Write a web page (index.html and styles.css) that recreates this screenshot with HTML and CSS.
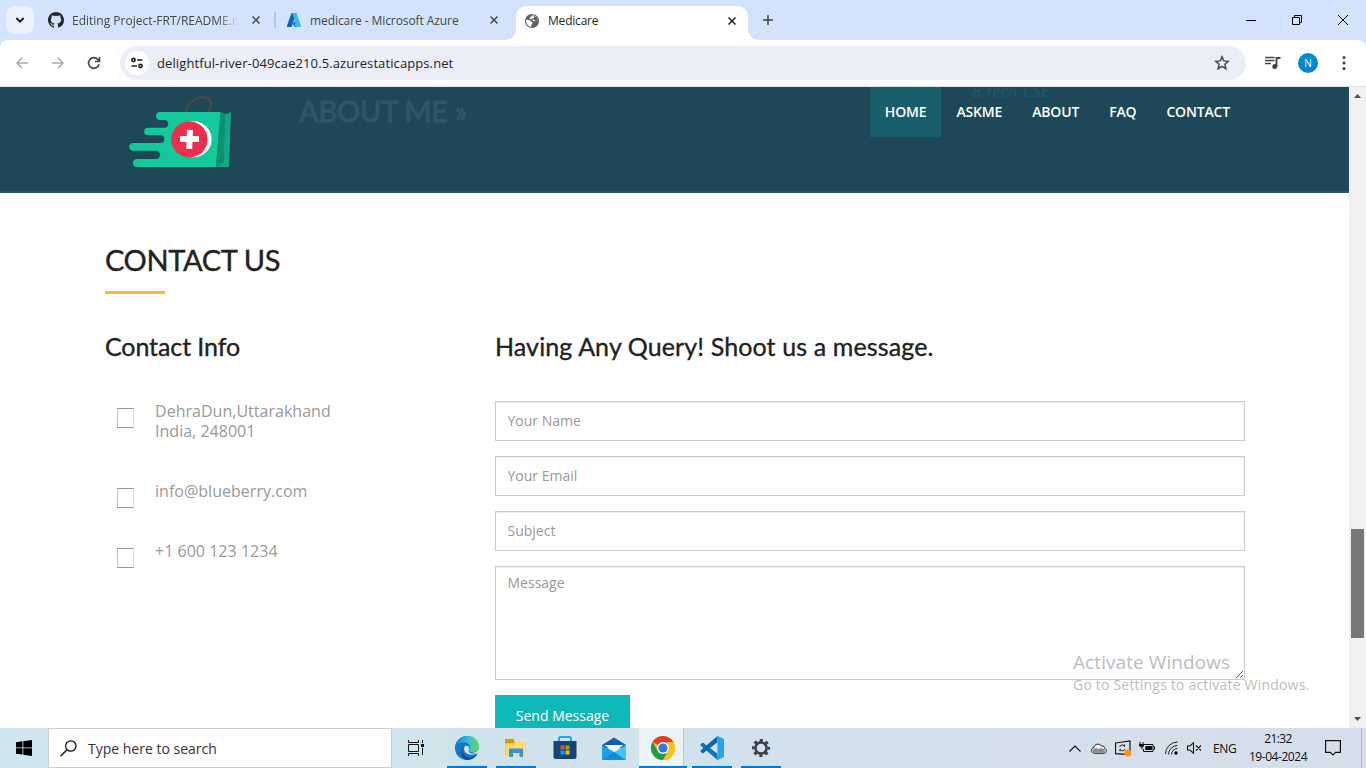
FILE: index.html
```html
<!DOCTYPE html>
<html lang="en">
<head>
<meta charset="utf-8">
<title>Medicare</title>
<link rel="stylesheet" href="styles.css">
</head>
<body>
<div class="screen">
  <header class="tabstrip">
    <div class="tab-search"><svg width="10" height="6" viewBox="0 0 10 6"><path d="M1.3 1l3.7 3.6L8.700 1" fill="none" stroke="#1f1f1f" stroke-width="1.9"/></svg></div>
    <div class="tab tab-one">
      <svg width="16" height="16" viewBox="0 0 16 16"><path fill="#24292f" d="M8 0C3.580 0 0 3.580 0 8c0 3.540 2.290 6.530 5.470 7.590.4.070.550-.170.550-.380 0-.190-.010-.820-.010-1.490-2.010.370-2.530-.490-2.690-.940-.090-.230-.480-.940-.820-1.130-.280-.150-.680-.520-.010-.530.630-.010 1.080.580 1.230.820.720 1.210 1.870.870 2.330.660.070-.520.280-.870.510-1.070-1.780-.2-3.640-.890-3.640-3.950 0-.870.310-1.590.820-2.150-.080-.2-.360-1.020.080-2.120 0 0 .670-.210 2.200.820.640-.180 1.320-.270 2-.270s1.360.090 2 .270c1.530-1.040 2.200-.820 2.200-.820.440 1.100.160 1.920.080 2.120.510.560.820 1.270.820 2.150 0 3.070-1.870 3.750-3.650 3.950.290.250.540.730.540 1.480 0 1.070-.010 1.930-.010 2.200 0 .210.150.460.550.380A8.010 8.010 0 0 0 16 8c0-4.420-3.580-8-8-8z"/></svg>
      <span class="tab-title fade">Editing Project-FRT/README.md</span>
      <svg class="close" width="8" height="8" viewBox="0 0 8 8"><path d="M.5.5l7 7M7.500.5l-7 7"/></svg>
    </div>
    <div class="tab tab-two">
      <svg width="16" height="16" viewBox="0 0 16 16"><path fill="#135fae" d="M5.500 1h4.700L5.500 15H1.500Q.6 15 .9 14z"/><path fill="#1482dc" d="M4 9.800h8L9 13 12 15H9z"/><path fill="#39b5f1" d="M6 1h4.500l4.400 13q.2 1-.8 1H10q.8-.2.500-1z"/></svg>
      <span class="tab-title azure-title">medicare - Microsoft Azure</span>
      <svg class="close" width="8" height="8" viewBox="0 0 8 8"><path d="M.5.5l7 7M7.500.5l-7 7"/></svg>
    </div>
    <div class="tab tab-active">
      <svg width="16" height="16" viewBox="0 0 16 16"><circle cx="8" cy="8" r="7.100" fill="#5f6368"/><path fill="#fff" d="M8.200 2.200c2.900-.2 5.500 2.500 5.500 5.500l-1.300-.5-1.400 1-2.200-.5-.5-1.500H6.100l-.5-1 1-1.500 1.500-.5zM2 6.600l4.600 1.200 1.800 1.700v1.200L7.200 12v2C4 13.600 1.600 10.300 2 6.600z"/><path fill="#5f6368" d="M9.300 2.600l.8 1.800-1 1.200H7.500l-.5 1h3l1 1.200h1.500l1.200-.9-1-2.500z"/></svg>
      <span class="tab-title active-title">Medicare</span>
      <svg class="close dark" width="8" height="8" viewBox="0 0 8 8"><path d="M.5.5l7 7M7.500.5l-7 7"/></svg>
    </div>
    <svg class="new-tab" width="10" height="10" viewBox="0 0 10 10"><path d="M5 0v10M0 5h10" stroke="#454746" stroke-width="1.500"/></svg>
    <div class="window-controls">
      <svg width="10" height="10" viewBox="0 0 10 10"><path d="M0 5.500h10"/></svg>
      <svg width="10" height="10" viewBox="0 0 10 10"><path d="M.5 2.500h7v7h-7zM2.500 2.500v-2h7v7h-2"/></svg>
      <svg width="10" height="10" viewBox="0 0 10 10"><path d="M0 0l10 10M10 0L0 10"/></svg>
    </div>
  </header>

  <div class="toolbar">
    <svg class="tool-icon back" width="12" height="12" viewBox="0 0 12 12"><path d="M12 6H1M6.200.7L1 6l5.200 5.300"/></svg>
    <svg class="tool-icon forward" width="12" height="12" viewBox="0 0 12 12"><path d="M0 6h11M5.800.7L11 6l-5.200 5.300"/></svg>
    <svg class="tool-icon reload" width="14" height="14" viewBox="0 0 14 14"><path d="M12 8.200A5.300 5.300 0 1 1 11 3.700L12.600 5.300M12.500 1v4.500H8"/></svg>
    <div class="omnibox">
      <span class="site-info"><svg width="14" height="12" viewBox="0 0 14 12"><g fill="none" stroke="#1f1f1f" stroke-width="1.600"><circle cx="3.500" cy="3" r="1.600"/><path d="M7 3h5.500M1.500 9H7"/><circle cx="10.500" cy="9" r="1.600"/></g></svg></span>
      <span class="url">delightful-river-049cae210.5.azurestaticapps.net</span>
      <svg width="16" height="16" viewBox="0 0 16 16"><path d="M8 1.800l1.800 4.100 4.500.4-3.400 3 1 4.400L8 11.400l-3.900 2.300 1-4.400-3.400-3 4.500-.4z" fill="none" stroke="#454746" stroke-width="1.500"/></svg>
    </div>
    <svg class="media" width="16" height="14" viewBox="0 0 16 14"><path d="M0 1.500h9.500M0 4.500h9.500M0 7.500h6" stroke="#454746" stroke-width="1.700"/><circle cx="9.800" cy="10.500" r="2.500" fill="#454746"/><path d="M11.500 10.500V2H15.500" fill="none" stroke="#454746" stroke-width="1.900"/></svg>
    <span class="avatar">N</span>
    <svg class="menu" width="4" height="16" viewBox="0 0 4 16"><g fill="#454746"><circle cx="2" cy="2.500" r="1.600"/><circle cx="2" cy="8" r="1.600"/><circle cx="2" cy="13.500" r="1.600"/></g></svg>
  </div>

  <div class="viewport">
    <main class="page">
      <nav class="navbar">
        <svg class="logo" width="106" height="74" viewBox="128 95 106 74">
          <path d="M185.700 112.500C188 101 201 94 208 98.500c4.500 3 3.500 9 .5 13.500" fill="none" stroke="#4e4848" stroke-width="1.800"/>
          <path fill="#13c89b" d="M160 112h61l-5 55h-79a4 4 0 0 1 0-8h19a4 4 0 0 0 0-8.300h-23.500a3.900 3.900 0 0 1 0-7.700H161a3.900 3.900 0 0 0 0-7.700h-13a3.800 3.800 0 0 1 0-7.600h17a3.900 3.900 0 0 0 0-7.700h-5a4 4 0 0 1 0-8z"/>
          <path fill="#0d8f72" d="M220.500 112l5 2-2 49-7.500 4z"/><path fill="#10a983" d="M225 114.500l6-2.500-2 55h-13l7.500-4.500z"/>
          <circle cx="193.600" cy="139.300" r="18" fill="#fff"/><ellipse cx="189.400" cy="139.400" rx="18.200" ry="18" fill="#ed2f4b"/>
          <path d="M190 129.800l-.8 19M180 139h19" stroke="#fff" stroke-width="6"/>
        </svg>
        <span class="ghost ghost-heading">ABOUT ME »</span>
        <span class="ghost ghost-degree">B.tech CSE</span>
        <ul class="nav">
          <li class="current">HOME</li><li>ASKME</li><li>ABOUT</li><li>FAQ</li><li>CONTACT</li>
        </ul>
      </nav>
      <section class="contact">
        <h2>CONTACT US</h2>
        <div class="columns">
          <div class="info">
            <h3>Contact Info</h3>
            <div class="info-row address"><i class="glyph"></i><p>DehraDun,Uttarakhand<br>India, 248001</p></div>
            <div class="info-row email"><i class="glyph"></i><p>info@blueberry.com</p></div>
            <div class="info-row phone"><i class="glyph"></i><p>+1 600 123 1234</p></div>
          </div>
          <form class="query">
            <h3>Having Any Query! Shoot us a message.</h3>
            <input type="text" placeholder="Your Name">
            <input type="text" placeholder="Your Email">
            <input type="text" placeholder="Subject">
            <textarea placeholder="Message"></textarea>
            <button type="button">Send Message</button>
          </form>
        </div>
      </section>
    </main>
    <div class="scrollbar">
      <svg width="7" height="4" viewBox="0 0 7 4"><path d="M0 4L3.500 0 7 4z" fill="#505050"/></svg>
      <div class="thumb"></div>
      <svg width="7" height="4" viewBox="0 0 7 4"><path d="M0 0l3.500 4L7 0z" fill="#505050"/></svg>
    </div>
    <div class="activation"><div class="activation-title">Activate Windows</div><div class="activation-text">Go to Settings to activate Windows.</div></div>
  </div>

  <footer class="taskbar">
    <div class="start"><svg width="16" height="16" viewBox="0 0 16 16"><path d="M0 2.200l6.500-.9v6.200H0zM7.300 1.200L16 0v7.500H7.300zM0 8.300h6.500v6.300L0 13.700zM7.300 8.300H16V16l-8.700-1.200z"/></svg></div>
    <div class="search"><svg width="17" height="17" viewBox="0 0 17 17"><circle cx="10.800" cy="6" r="5.200" fill="none" stroke="#111" stroke-width="1.300"/><path d="M7 9.800L.5 16.300" stroke="#111" stroke-width="1.500"/></svg><span>Type here to search</span></div>
    <div class="app taskview"><svg width="17" height="16" viewBox="0 0 17 16"><path d="M.5 0v2.500h10V0M.5 16v-2.500h10V16M.5 4.500h10v7H.5zM14.500 0v3M14.500 8v7" fill="none" stroke="#111"/><path d="M13 4h3v3h-3z" fill="#111"/></svg></div>
    <div class="app edge running"><svg width="24" height="24" viewBox="0 0 24 24"><defs><linearGradient id="edgeTop" x1="0" x2="1"><stop offset="0" stop-color="#1683ce"/><stop offset=".55" stop-color="#35bedc"/><stop offset="1" stop-color="#65dc55"/></linearGradient></defs><circle cx="12" cy="12" r="12" fill="#1674c8"/><path d="M24 10.500c0 3.500-2 6-6.500 6.300l5 1.200L24 16z" fill="#d1e5ed"/><path d="M.3 10C1.500 4 6.400 0 12 0c7.200 0 12 5 12 10.300 0 3.700-3 6-6 6-2.500 0-4-.8-4-1.800 0-.7 1-1.100 1-3 0-3-2.800-5-6.200-5C5 6.500 1.500 8 .3 10z" fill="url(#edgeTop)"/><path d="M9 10c-3 4-1 11 5 11.500 3 .2 6-1 8.300-3.700C20 22 16 24 12 24 6 23 5 13 9 10z" fill="#114b91"/><path d="M10 10c-3 4.500 1.500 9 6.500 8.800 2.500 0 4.500-1 6-2-1 .1-2.500.8-4.500.8-3.500 0-5-1.700-4-4 1-2.600-1-4.300-4-3.600z" fill="#d1e5ed"/></svg></div>
    <div class="app running"><svg width="22" height="20" viewBox="0 0 22 20"><path d="M0 2h9l2 2h10v14H0z" fill="#fbc64b"/><path d="M0 1h9v4H0z" fill="#d99517"/><path d="M1 6h8l2-2h10v14H1z" fill="#ffd96f"/><path d="M4 19v-8.500h14V19h-3.500v-4H8v4z" fill="#3994d6"/></svg></div>
    <div class="app"><svg width="24" height="24" viewBox="0 0 24 24"><path d="M6 6V2.500Q6 1 7.500 1h9Q18 1 18 2.500V6" fill="none" stroke="#22a7e8" stroke-width="2"/><path d="M.5 5h23v16q0 2-2 2h-19q-2 0-2-2z" fill="#16437a"/><path d="M7.500 9.500h4v4h-4z" fill="#f25022"/><path d="M12.500 9.500h4v4h-4z" fill="#7fba00"/><path d="M7.500 14.500h4v4h-4z" fill="#00a4ef"/><path d="M12.500 14.500h4v4h-4z" fill="#ffb900"/></svg></div>
    <div class="app"><svg width="24" height="23" viewBox="0 0 24 23"><path d="M0 8L12 .5 24 8v3H0z" fill="#1060af"/><path d="M2.500 8h19L12 15z" fill="#f5f7fa"/><path d="M0 8l13 7.500L24 23H0z" fill="#1ba1e6"/><path d="M24 8L12 15.500 24 23z" fill="#43c4f5"/><path d="M0 23l12-8 12 8z" fill="#168bda"/></svg></div>
    <div class="app chrome running"><svg width="24" height="24" viewBox="0 0 24 24"><circle cx="12" cy="12" r="12" fill="#fbc116"/><path d="M12 12L1.600 6a12 12 0 0 1 20.800 0z" fill="#e33b2e"/><path d="M1.600 6A12 12 0 0 0 12 24l5.200-9L12 12 6.800 15z" fill="#229a4b"/><path d="M12 24l5.200-9c1.400-3 .5-6-1.700-9h6.900A12 12 0 0 1 12 24z" fill="#fbc116"/><circle cx="12" cy="12" r="6" fill="#fff"/><circle cx="12" cy="12" r="4.600" fill="#3478e5"/></svg></div>
    <div class="app code running"><svg width="24" height="24" viewBox="0 0 24 24"><path d="M.8 8.200l2-1.700L17.500 17.700V24L.5 9.500z" fill="#1373b5"/><path d="M.8 15.800l2 1.700L17.500 6.300V0L.5 14.500z" fill="#0869ab"/><path d="M17.500 0L24 3v18l-6.500 3-1.300-1.200 1.300-2V3z" fill="#26a3ea"/></svg></div>
    <div class="app running"><svg width="20" height="20" viewBox="0 0 20 20"><g fill="none" stroke="#3e4245"><circle cx="10" cy="10" r="5.600" stroke-width="2.600"/><circle cx="10" cy="10" r="7.800" stroke-width="2.600" stroke-dasharray="3.060 3.066" stroke-dashoffset="1.530"/></g></svg></div>
    <div class="tray">
      <svg class="t-up" width="12" height="7" viewBox="0 0 12 7"><path d="M.5 6.500L6 1l5.500 5.500" fill="none" stroke="#111" stroke-width="1.200"/></svg>
      <svg class="t-cloud" width="16" height="11" viewBox="0 0 16 11"><path d="M3.500 10.300C-.5 10-.5 5 3 4.500 3.500.8 8 0 10.200 2.800c2.500 0 3.500 1 3.500 2.700 2.500 1 2 4.600-.7 4.800z" fill="#eee" stroke="#222"/><path d="M1 8c1.500-3.500 5-3 6-1.800C9.500 4.500 12 5 14 7c.3 1.700-1 2.800-2 2.800H3.500Q1.500 9.500 1 8z" fill="#8c8c8c"/></svg>
      <svg class="t-sync" width="17" height="17" viewBox="0 0 17 17"><path d="M.5 3L15 1v13.500L.5 13.700z" fill="none" stroke="#111" stroke-width="1.200"/><path d="M4.500 7c1-2.500 4-2.500 5-.5V4.500M10 9c-1 2.200-4 2.200-5 .3v2" fill="none" stroke="#111"/><circle cx="12.700" cy="13" r="3.600" fill="#f79a12"/></svg>
      <svg class="t-battery" width="16" height="12" viewBox="0 0 16 12"><path d="M5 2.500h9v7H4.500V7M14.500 4.500h1v3h-1M1 0v3M4 0v3" fill="none" stroke="#111"/><path d="M0 2h5v2L3.500 5.500v2h-1v-2L0 4zM6.500 4H13v4H6z" fill="#111"/></svg>
      <svg class="t-wifi" width="13" height="14" viewBox="0 0 13 14"><g fill="none" stroke="#222"><path d="M.5 13A12 12 0 0 1 12.500 1"/><path d="M3.500 13.500A9 9 0 0 1 12.500 4.500"/><path d="M6.500 13.500a6 6 0 0 1 6-6"/></g><circle cx="11" cy="12" r="1.700"/></svg>
      <svg class="t-mute" width="15" height="12" viewBox="0 0 15 12"><path d="M.5 4H3l3.500-3.300v10.600L3 8H.5zM9 3.500l5 5M14 3.500l-5 5" fill="none" stroke="#111" stroke-width="1.100"/></svg>
      <span class="lang">ENG</span>
      <div class="clock"><span class="time">21:32</span><span class="date">19-04-2024</span></div>
      <svg class="t-note" width="16" height="16" viewBox="0 0 16 16"><path d="M.6.6h14.800v11.800h-4.800L8 15l-2.600-2.600H.6z" fill="none" stroke="#111" stroke-width="1.200"/></svg>
      <i class="peek"></i>
    </div>
  </footer>
</div>
</body>
</html>
```
FILE: styles.css
```css
* { box-sizing: border-box; }
body { margin: 0; overflow: hidden; font-family: "Open Sans", "Noto Sans", sans-serif; }
svg { display: block; flex: none; }
h2, h3, p, ul { margin: 0; padding: 0; font-weight: 400; }
.screen { width: 1366px; height: 768px; display: flex; flex-direction: column; overflow: hidden; background: #d3e3fd; }

/* Browser tabs */
.tabstrip { height: 40px; flex: none; background: #d3e3fd; display: flex; align-items: center; padding-left: 6px; }
.tab-search { width: 28px; height: 28px; border-radius: 9px; background: #e9f1fe; display: flex; align-items: center; justify-content: center; }
.tab { display: flex; align-items: center; height: 20px; color: #454746; }
.tab-one { width: 242px; height: 16px; padding: 0 15px 0 14px; border-right: 2px solid #a8c7fa; }
.tab-two { width: 240px; padding-left: 10px; padding-right: 18px; }
.tab-title { font-size: 12px; margin-left: 8px; white-space: nowrap; flex: 1; overflow: hidden; line-height: 18px; padding-top: 2px; font-weight: 500; }
.azure-title { letter-spacing: -.08px; }
.active-title { letter-spacing: -.2px; padding-top: 1px; margin-bottom: 1px; }
.fade { flex: none; width: 167px; margin-right: 13px; -webkit-mask-image: linear-gradient(90deg, #000 145px, transparent 167px); mask-image: linear-gradient(90deg, #000 145px, transparent 167px); }
.close { stroke: #454746; stroke-width: 1.5; fill: none; margin-left: auto; }
.close.dark { stroke: #1f1f1f; }
.tab-active { width: 232px; height: 34px; align-self: flex-end; background: #fff; border-radius: 10px 10px 0 0; padding: 0 12px 5px 8px; color: #1f1f1f; position: relative; }
.tab-active::before, .tab-active::after { content: ""; position: absolute; bottom: 0; width: 10px; height: 10px; }
.tab-active::before { left: -10px; background: radial-gradient(circle at 0 0, #d3e3fd 9.500px, #fff 10px); }
.tab-active::after { right: -10px; background: radial-gradient(circle at 100% 0, #d3e3fd 9.500px, #fff 10px); }
.new-tab { margin-left: 15px; }
.window-controls { margin-left: auto; display: flex; gap: 36px; padding-right: 18px; }
.window-controls path { fill: none; stroke: #000; }

/* Address bar */
.toolbar { height: 47px; flex: none; display: flex; align-items: center; background: #fff; border-radius: 8px 8px 0 0; border-bottom: 1px solid #dce3e6; padding-left: 16px; }
.tool-icon { fill: none; stroke: #a8a8a8; stroke-width: 1.5; }
.forward { margin-left: 24px; }
.reload { margin-left: 23px; stroke: #454746; stroke-width: 1.700; }
.omnibox { margin-left: 19px; width: 1126px; height: 34px; border-radius: 17px; background: #ebeef7; display: flex; align-items: center; padding: 0 16px 0 5px; }
.site-info { width: 24px; height: 24px; border-radius: 50%; background: #fff; display: flex; align-items: center; justify-content: center; }
.url { flex: 1; margin-left: 8px; font-size: 13px; letter-spacing: .1px; color: #1f1f1f; }
.media { margin-left: 19px; }
.avatar { margin-left: 17px; width: 20px; height: 20px; border-radius: 50%; background: #0288d1; color: #fff; font-size: 10px; line-height: 20px; text-align: center; }
.menu { margin-left: 24px; }

/* Web page */
.viewport { height: 641px; flex: none; display: flex; position: relative; overflow: hidden; background: #fff; }
.page { width: 1349px; height: 641px; overflow: hidden; }
.navbar { height: 106px; background: #1e4757; border-bottom: 2px solid #2d5768; display: flex; justify-content: space-between; padding: 0 104px 0 128px; position: relative; }
.logo { margin-top: 8px; }
.ghost { position: absolute; white-space: nowrap; }
.ghost-heading { left: 299px; top: 6px; font: 500 29px/36px "Lato", sans-serif; letter-spacing: -.25px; color: #2e5868; -webkit-text-stroke: .9px #2e5868; }
.ghost-degree { left: 972px; top: -8px; font-size: 16px; letter-spacing: .45px; line-height: 24px; font-style: italic; color: #1b5b69; }
.nav { display: flex; list-style: none; height: 50px; position: relative; }
.nav li { padding: 0 15px; font-size: 14px; line-height: 50px; color: #fff; font-weight: 600; letter-spacing: -.17px; }
.nav .current { background: #195e6b; }

.contact { padding: 49px 104px 0 105px; }
.contact h2 { width: 190px; font: 400 29px/36px "Lato", sans-serif; letter-spacing: -.35px; color: #222; white-space: nowrap; -webkit-text-stroke: .4px #222; }
.contact h2::after { content: ""; display: block; width: 60px; height: 3px; background: #fdb73b; margin-top: 13px; }
.columns { display: grid; grid-template-columns: 390px 750px; padding-top: 37px; }
.contact h3 { font: 400 25px/30px "Lato", sans-serif; letter-spacing: -.1px; color: #222; white-space: nowrap; -webkit-text-stroke: .35px #222; height: 70px; }
.contact .query h3 { letter-spacing: .12px; }
.info-row { display: flex; padding-left: 12px; font-size: 16px; line-height: 20px; letter-spacing: .02px; color: #999; }
.glyph { width: 17px; height: 20px; border: 1px solid #999; border-left-color: #bdc4ca; border-right-color: #eed6ac; margin: 7px 21px 0 0; }
.address { height: 80px; }
.email, .phone { height: 60px; }
.query { display: flex; flex-direction: column; align-items: flex-start; }
.query input, .query textarea { width: 750px; height: 40px; border: 1px solid #ccc; padding: 5px 11.500px 7px; font: 14px/20px "Open Sans", sans-serif; margin: 0 0 15px; box-shadow: inset 0 1px 1px rgba(0,0,0,.075); background: #fff; border-radius: 0; outline: none; }
.query textarea { height: 114px; padding-top: 6px; resize: both; }
::placeholder { color: #999; opacity: 1; }
.query button { width: 135px; height: 42px; background: #0fb8b6; border: 0; color: #fff; font: 14px/42px "Open Sans", sans-serif; padding: 0; }
.scrollbar { width: 17px; height: 641px; background: #f0f0f0; display: flex; flex-direction: column; padding: 7px 2px; align-items: center; }
.thumb { width: 13px; height: 109px; background: #787878; margin-top: 431px; margin-bottom: auto; }
.activation { position: absolute; left: 1073px; top: 562px; color: #bcbcbc; white-space: nowrap; pointer-events: none; }
.activation-title { font-size: 19px; line-height: 26px; letter-spacing: .08px; }
.activation-text { font-size: 14px; line-height: 20px; letter-spacing: .2px; }

/* Desktop taskbar */
.taskbar { height: 40px; flex: none; display: flex; background: linear-gradient(90deg, #cfe7ee, #d1e2ec 55%, #d6deeb); }
.start { width: 48px; display: flex; align-items: center; justify-content: center; }
.search { width: 344px; background: #fff; border: 1px solid #ccc; display: flex; align-items: center; padding-left: 11px; font-size: 14px; color: #333; }
.search span { margin-left: 11px; }
.app { width: 49px; display: flex; align-items: center; justify-content: center; position: relative; padding-left: 1px; }
.taskview { width: 50px; padding: 0 2px 0 0; }
.running::after { content: ""; position: absolute; bottom: 0; left: 5px; width: 40px; height: 2px; background: #0078d7; }
.chrome { background: #edf4f7; width: 45px; margin-left: 1px; padding: 0 0 0 3px; border-right: 1px solid #b8cbd4; }
.chrome::after { left: 0; width: 48px; }
.code { margin-left: 3px; }
.tray { margin-left: auto; display: flex; align-items: center; font-size: 12px; color: #111; }
.t-cloud { margin-left: 10px; }
.t-sync { margin-left: 8px; }
.t-battery { margin-left: 7px; }
.t-wifi { margin-left: 10px; }
.t-mute { margin-left: 9px; }
.lang { width: 24px; margin-left: 11px; letter-spacing: -.3px; }
.clock { width: 60px; margin-left: 11px; display: flex; flex-direction: column; align-items: center; line-height: 18px; white-space: nowrap; }
.t-note { margin-left: 17px; }
.peek { width: 5px; height: 40px; margin-left: 20px; border-left: 1px solid #aeb9c8; }
.time { letter-spacing: -.6px; }
.date { letter-spacing: -.45px; }
```
